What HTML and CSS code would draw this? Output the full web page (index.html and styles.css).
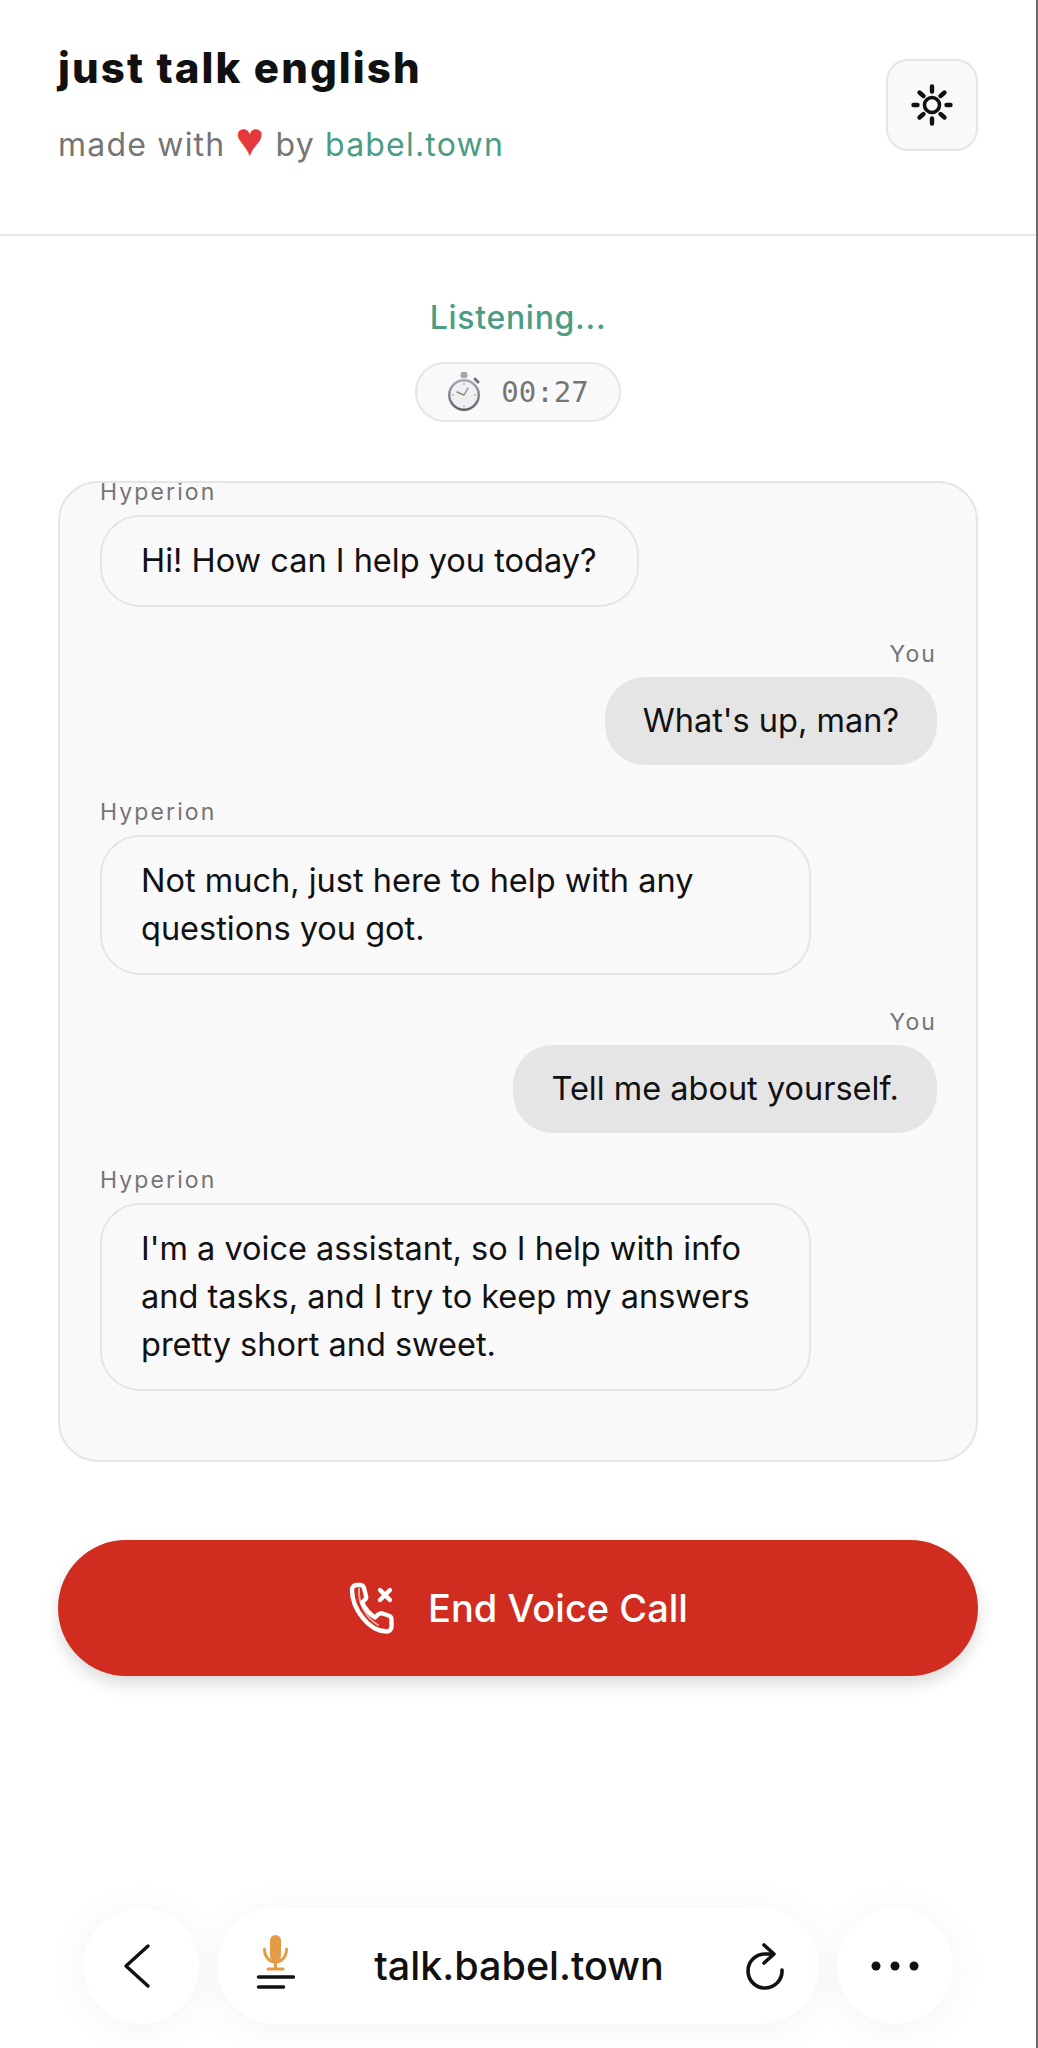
FILE: index.html
```html
<!DOCTYPE html>
<html lang="en">
<head>
    <meta charset="UTF-8">
    <title>just talk english</title>
    <link rel="stylesheet" href="styles.css">
</head>
<body>
<div class="page">

    <header class="header">
        <div class="brand">
            <h1>just talk english</h1>
            <p class="credit">made with <span class="heart">♥</span> by <a href="#">babel.town</a></p>
        </div>
        <button class="theme-toggle" aria-label="Toggle theme">
            <svg width="44" height="44" viewBox="0 0 44 44" fill="none" stroke="#111" stroke-width="4.400" stroke-linecap="round">
                <circle cx="22" cy="22" r="7.500" stroke-width="3.600"/>
                <path d="M22 3.500v5M22 35.500v5M3.500 22h4M36.500 22h4M9.500 9.500l4 3.500M34.500 9.500l-4 3.500M9.500 34.500l4-3.500M34.500 34.500l-4-3.500"/>
            </svg>
        </button>
    </header>

    <main class="call">
        <div class="status">Listening...</div>
        <div class="timer">
            <svg width="34" height="42" viewBox="0 0 34 42">
                <defs>
                    <linearGradient id="rim" x1="0" y1="0" x2="0" y2="1">
                        <stop offset="0" stop-color="#a9abb5"/>
                        <stop offset="1" stop-color="#5d606d"/>
                    </linearGradient>
                </defs>
                <rect x="13.500" y="1" width="7" height="6" rx="2" fill="#a4a6b0"/>
                <path d="M28 8l3 3" stroke="#6d6f7a" stroke-width="3" stroke-linecap="round"/>
                <circle cx="17" cy="24" r="16" fill="url(#rim)"/>
                <circle cx="17" cy="24" r="13.500" fill="#f0f0f0"/>
                <path d="M17 24l-7-3M17 24l4-7" stroke="#8a8a8a" stroke-width="1.400" stroke-linecap="round"/>
                <path d="M17 12v2M17 34v2M5 24h2M27 24h2" stroke="#b5b5b5" stroke-width="1.400"/>
            </svg>
            <span>00:27</span>
        </div>

        <section class="chat">
            <div class="msg">
                <div class="who">Hyperion</div>
                <div class="bubble">Hi! How can I help you today?</div>
            </div>
            <div class="msg me">
                <div class="who">You</div>
                <div class="bubble">What's up, man?</div>
            </div>
            <div class="msg">
                <div class="who">Hyperion</div>
                <div class="bubble">Not much, just here to help with any questions you got.</div>
            </div>
            <div class="msg me">
                <div class="who">You</div>
                <div class="bubble">Tell me about yourself.</div>
            </div>
            <div class="msg">
                <div class="who">Hyperion</div>
                <div class="bubble">I'm a voice assistant, so I help with info and tasks, and I try to keep my answers pretty short and sweet.</div>
            </div>
        </section>

        <button class="end-call">
            <svg width="50" height="52" viewBox="0 0 50 52" fill="none" stroke="#fff" stroke-width="4.400" stroke-linecap="round" stroke-linejoin="round">
                <path d="M4 8c0-3 2-5 5-5h3c2 0 3.500 1 4 3l2 8c.5 2-.5 3.500-2 4.500l-2 2c3 6 7 11 13 15l3-3c1.500-1 3-1.500 4.500-1l6 2c2 .7 3 2 3 4v7c0 3-2 5-5 5C20 49 4 26 4 8z"/>
                <path d="M32 8l10 10M42 8L32 18"/>
                <path d="M11 7c-1 14 7 29 19 36" stroke-width="2" opacity="0.6"/>
            </svg>
            <span>End Voice Call</span>
        </button>
    </main>

    <nav class="browser-bar">
        <div class="round-btn">
            <svg class="back-icon" width="30" height="46" viewBox="0 0 30 46" fill="none" stroke="#111" stroke-width="3.400" stroke-linecap="round" stroke-linejoin="round">
                <path d="M26 3L4 23l22 20"/>
            </svg>
        </div>
        <div class="url-pill">
            <svg class="site-icon" width="40" height="56" viewBox="0 0 40 56" fill="none">
                <rect x="15" y="1" width="11" height="26" rx="5.500" fill="#e59a45"/>
                <path d="M9.500 15c0 8 5 13 11 13s11-5 11-13M20.500 28v7M13 35h15" stroke="#e59a45" stroke-width="3" stroke-linecap="round"/>
                <path d="M3.500 43h35M3.500 53h25" stroke="#111" stroke-width="3.500" stroke-linecap="round"/>
            </svg>
            <span class="url">talk.babel.town</span>
            <svg width="40" height="48" viewBox="0 0 40 48" fill="none" stroke="#111" stroke-width="3.600" stroke-linecap="round" stroke-linejoin="round">
                <path d="M37 28A17 17 0 1 1 20 12h8"/>
                <path d="M19 3l10 9-10 9"/>
            </svg>
        </div>
        <div class="round-btn">
            <svg width="48" height="10" viewBox="0 0 48 10" fill="#111">
                <circle cx="5" cy="5" r="4.500"/>
                <circle cx="24" cy="5" r="4.500"/>
                <circle cx="43" cy="5" r="4.500"/>
            </svg>
        </div>
    </nav>

</div>
</body>
</html>
```

FILE: styles.css
```css
* {
    box-sizing: border-box;
}

body {
    margin: 0;
    background-color: #fff;
    font-family: Inter, "Liberation Sans", Arial, sans-serif;
    color: #111;
}

button {
    font-family: inherit;
    cursor: pointer;
}

.page {
    display: flex;
    flex-direction: column;
    width: 1038px;
    height: 2048px;
    overflow: hidden;
    border-right: 2px solid #6b6b6b;
}

.header {
    display: flex;
    justify-content: space-between;
    align-items: flex-start;
    height: 236px;
    padding: 44px 58px 0;
    border-bottom: 2px solid #e5e5e5;
}

.header h1 {
    margin: 0;
    font-size: 42px;
    line-height: 48px;
    font-weight: 800;
    letter-spacing: 2.100px;
}

.credit {
    margin: 31px 0 0;
    font-size: 32px;
    line-height: 44px;
    letter-spacing: 1.200px;
    color: #757575;
}

.credit a {
    color: #4a9d84;
    text-decoration: none;
}

.heart {
    font-family: "Liberation Sans", sans-serif;
    color: #e5383b;
    font-size: 48px;
    line-height: 0;
}

.theme-toggle {
    display: flex;
    align-items: center;
    justify-content: center;
    width: 92px;
    height: 92px;
    margin-top: 15px;
    padding: 0;
    background-color: #f9f9f9;
    border: 2px solid #e5e5e5;
    border-radius: 22px;
}

.call {
    display: flex;
    flex-direction: column;
    align-items: center;
    padding: 60px 58px 0;
}

.status {
    font-size: 32px;
    line-height: 44px;
    font-weight: 500;
    letter-spacing: 0.700px;
    color: #4a9d84;
}

.timer {
    display: flex;
    align-items: center;
    gap: 20px;
    height: 60px;
    margin-top: 22px;
    padding: 0 30px;
    background-color: #f9f9f9;
    border: 2px solid #e5e5e5;
    border-radius: 30px;
    font-family: "DejaVu Sans Mono", monospace;
    font-size: 29px;
    color: #757575;
}

.chat {
    width: 100%;
    height: 981px;
    margin-top: 59px;
    padding: 0 39px 0 40px;
    overflow: hidden;
    background-color: #f9f9f9;
    border: 2px solid #e5e5e5;
    border-radius: 40px;
}

.msg {
    display: flex;
    flex-direction: column;
    align-items: flex-start;
    margin-bottom: 36px;
}

.msg:first-child {
    margin-top: -2px;
}

.msg.me {
    align-items: flex-end;
}

.who {
    height: 22px;
    margin-bottom: 12px;
    font-size: 23px;
    line-height: 22px;
    letter-spacing: 2.100px;
    color: #757575;
}

.bubble {
    max-width: 711px;
    padding: 20px 40px 20px 39px;
    font-size: 32.500px;
    line-height: 48px;
    background-color: #f9f9f9;
    border: 2px solid #e5e5e5;
    border-radius: 40px;
}

.me .bubble {
    padding: 20px 38px;
    background-color: #e5e5e5;
    border: none;
}

.end-call {
    display: flex;
    align-items: center;
    justify-content: center;
    gap: 30px;
    width: 100%;
    height: 136px;
    margin-top: 78px;
    color: #fff;
    font-size: 38px;
    font-weight: 500;
    background-color: #d12c20;
    border: none;
    border-radius: 68px;
    box-shadow: 0 8px 16px rgba(0, 0, 0, 0.14);
}

.browser-bar {
    display: flex;
    justify-content: space-between;
    margin-top: auto;
    margin-bottom: 24px;
    padding: 0 83px;
}

.round-btn {
    display: flex;
    align-items: center;
    justify-content: center;
    width: 116px;
    height: 116px;
    background-color: #fff;
    border-radius: 50%;
    box-shadow: 0 4px 40px rgba(0, 0, 0, 0.05);
}

.back-icon {
    margin-right: 8px;
}

.url-pill {
    display: flex;
    align-items: center;
    width: 602px;
    height: 116px;
    padding: 0 34px 0 38px;
    background-color: #fff;
    border-radius: 58px;
    box-shadow: 0 4px 40px rgba(0, 0, 0, 0.05);
}

.site-icon {
    margin-bottom: 8px;
}

.url {
    flex: 1;
    padding-right: 2px;
    text-align: center;
    font-size: 39.500px;
    font-weight: 500;
}
```
